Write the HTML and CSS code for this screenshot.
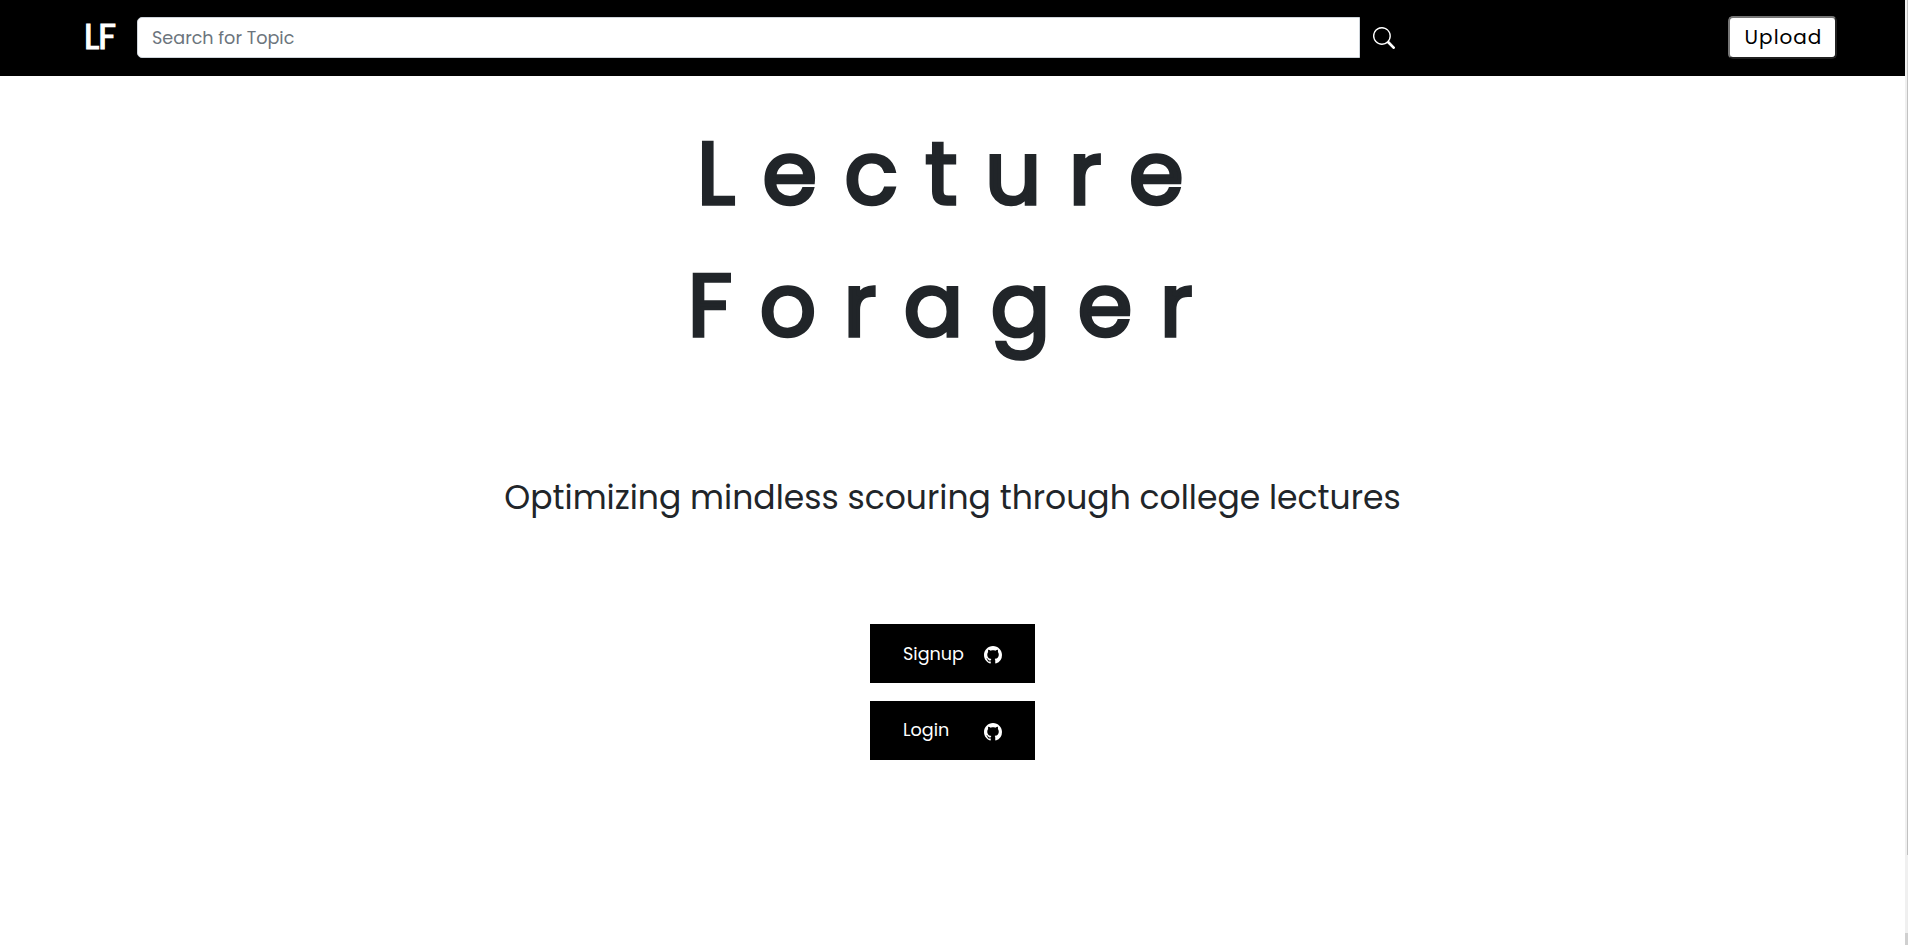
FILE: index.html
```html
<!DOCTYPE html>
<html lang="en">
<head>
<meta charset="utf-8">
<title>Lecture Forager</title>
<link rel="stylesheet" href="styles.css">
</head>
<body>
<svg width="0" height="0" class="defs"><symbol id="github" viewBox="0 0 16 16"><path d="M8 0C3.58 0 0 3.58 0 8c0 3.54 2.29 6.53 5.47 7.59.4.07.55-.17.55-.38 0-.19-.01-.82-.01-1.49-2.01.37-2.53-.49-2.69-.94-.09-.23-.48-.94-.82-1.13-.28-.15-.68-.52-.01-.53.63-.01 1.08.58 1.23.82.72 1.21 1.87.87 2.33.66.07-.52.28-.87.51-1.07-1.78-.2-3.64-.89-3.64-3.95 0-.87.31-1.59.82-2.15-.08-.2-.36-1.02.08-2.12 0 0 .67-.21 2.2.82.64-.18 1.32-.27 2-.27s1.36.09 2 .27c1.53-1.04 2.2-.82 2.2-.82.44 1.1.16 1.92.08 2.12.51.56.82 1.27.82 2.15 0 3.07-1.87 3.75-3.65 3.95.29.25.54.73.54 1.48 0 1.07-.01 1.93-.01 2.2 0 .21.15.46.55.38A8.01 8.01 0 0 0 16 8c0-4.42-3.58-8-8-8z"/></symbol></svg>
<div class="page">
  <header class="navbar">
    <a class="brand">LF</a>
    <div class="search">
      <div class="search-input"><span class="placeholder">Search for Topic</span></div>
      <svg class="search-icon" viewBox="0 0 16 16"><path d="M11.742 10.344a6.5 6.5 0 1 0-1.397 1.398h-.001q.044.06.098.115l3.85 3.85a1 1 0 0 0 1.415-1.414l-3.85-3.85a1 1 0 0 0-.115-.1zM12 6.5a5.5 5.5 0 1 1-11 0 5.5 5.5 0 0 1 11 0"/></svg>
    </div>
    <button class="upload"><span>Upload</span></button>
  </header>
  <main class="hero">
    <h1 class="title"><span>Lecture</span><span>Forager</span></h1>
    <p class="tagline"><span>Optimizing mindless scouring through college lectures</span></p>
    <div class="actions">
      <a class="action"><span class="signup">Signup</span><svg class="mark"><use href="#github"/></svg></a>
      <a class="action"><span class="login">Login</span><svg class="mark"><use href="#github"/></svg></a>
    </div>
  </main>
</div>
<div class="scrollbar"><div class="thumb"></div><div class="corner"></div></div>
</body>
</html>
```
FILE: styles.css
```css
* { box-sizing: border-box; }
body {
  margin: 0;
  height: 945px;
  overflow: hidden;
  display: flex;
  background: #fff;
  color: #212529;
  font-family: Poppins, Inter, sans-serif;
}
.defs { position: absolute; }
.page { flex: 1; }
.navbar {
  height: 76px;
  background: #000;
  display: flex;
  align-items: center;
  padding: 0 68px 0 84px;
}
.brand {
  width: 53px;
  color: #fff;
  font-size: 35.2px;
  line-height: 50px;
  margin-bottom: 2px;
  letter-spacing: -1px;
  -webkit-text-stroke: 1.2px #fff;
}
.search { display: flex; align-items: center; flex: 1; }
.search-input {
  flex: 0 0 1223px;
  height: 41px;
  margin-bottom: 1px;
  background: #fff;
  border: 1px solid #ced4da;
  border-radius: 5px 0 0 5px;
  padding: 0 14px;
  color: #6c757d;
  font-size: 17.6px;
  line-height: 40px;
}
.search-icon { width: 22px; height: 22px; margin-left: 13px; fill: #fff; }
.upload {
  width: 109px;
  height: 43px;
  margin-bottom: 1px;
  padding: 0 0 0 2px;
  background: #fff;
  border: 2px solid;
  border-color: #767676 #212121 #212121 #767676;
  border-radius: 5px;
  color: #000;
  font: inherit;
  font-size: 20px;
  line-height: 38px;
  letter-spacing: 1px;
}
.upload span { display: block; padding-bottom: 1px; }
.hero { display: flex; flex-direction: column; align-items: center; }
.title {
  margin: 32px 0 0;
  padding-left: 3px;
  display: flex;
  flex-direction: column;
  align-items: center;
  font-size: 88px;
  font-weight: 400;
  line-height: 132px;
  letter-spacing: 27.5px;
  -webkit-text-stroke: 3.6px #212529;
}
.tagline { margin: 101px 0 0; font-size: 33px; line-height: 50px; }
.actions { margin-top: 101px; display: flex; flex-direction: column; gap: 18px; }
.action {
  width: 165px;
  height: 59px;
  padding: 0 33px;
  display: flex;
  align-items: center;
  justify-content: space-between;
  background: #000;
  color: #fff;
  font-size: 17.6px;
}
.login { padding-bottom: 2px; }
.mark { width: 18px; height: 18px; margin-top: 3px; fill: #fff; }
.scrollbar { width: 3px; height: 945px; background: #f0f0f0; display: flex; flex-direction: column; align-items: flex-end; justify-content: space-between; }
.thumb { width: 1px; height: 855px; background: #c1c1c1; }
.corner { width: 3px; height: 12px; background: #d0d0d0; }
```
